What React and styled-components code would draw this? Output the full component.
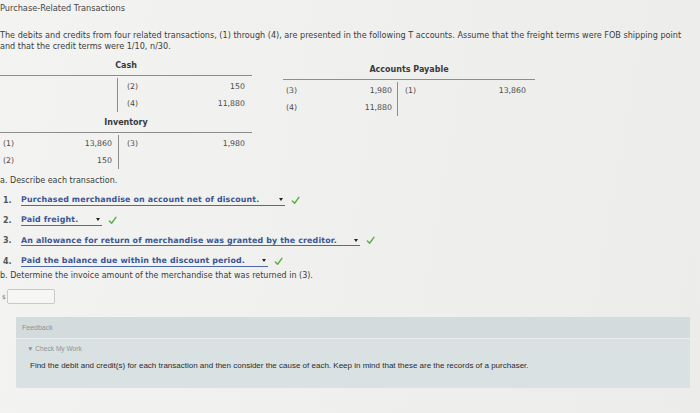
import styled, { createGlobalStyle } from "styled-components";

const GlobalStyle = createGlobalStyle`
  html, body {
    margin: 0;
    padding: 0;
    background: #f0f0ee;
  }
  body {
    width: 700px;
    height: 413px;
    overflow: hidden;
  }
`;

const Page = styled.div`
  width: 700px;
  height: 413px;
  box-sizing: border-box;
  background: linear-gradient(100deg, #f3f3f1 0%, #efefed 55%, #ececea 100%);
  font-family: "DejaVu Sans", Verdana, sans-serif;
  font-size: 8px;
  color: #3c3c3c;
  padding-top: 3px;
`;

const Title = styled.div`
  line-height: 11px;
  color: #464646;
  font-size: 8.2px;
`;

const Intro = styled.p`
  margin: 16px 0 0;
  line-height: 11px;
  width: 690px;
  font-size: 8.1px;
`;

const AccountsRow = styled.div`
  display: flex;
  align-items: flex-start;
  gap: 31px;
  margin-top: 8px;
`;

const AccountsColumn = styled.div`
  display: flex;
  flex-direction: column;
  gap: 5px;
`;

const TAccount = styled.div`
  width: 252px;
  margin-top: ${(p) => p.$offset || 0}px;
`;

const TTitle = styled.div`
  text-align: center;
  font-weight: bold;
  line-height: 12px;
  padding-bottom: 3px;
  color: #3a3a3a;
`;

const TBody = styled.div`
  display: grid;
  grid-template-columns: ${(p) => p.$left || 118}px 1fr;
  border-top: 1px solid #8d8d8d;
  padding-top: 2px;
  min-height: 34px;
`;

const TSide = styled.div`
  display: flex;
  flex-direction: column;
  border-right: ${(p) => (p.$divider ? "1px solid #8d8d8d" : "none")};
`;

const TEntry = styled.div`
  display: flex;
  justify-content: space-between;
  height: 17px;
  line-height: 17px;
  padding: 0 ${(p) => p.$pr}px 0 ${(p) => p.$pl}px;
  color: #4a4a4a;
  font-size: 7.8px;
`;

const PartLabel = styled.div`
  margin-top: ${(p) => p.$gap}px;
  line-height: 11px;
`;

const AnswerList = styled.ol`
  list-style: none;
  margin: 4px 0 0;
  padding: 0;
`;

const AnswerItem = styled.li`
  display: flex;
  align-items: center;
  height: 20.3px;
`;

const ItemNumber = styled.span`
  width: 21px;
  padding-left: 3px;
  box-sizing: border-box;
  font-weight: bold;
  color: #555;
`;

const Select = styled.span`
  display: inline-flex;
  align-items: center;
  justify-content: space-between;
  width: ${(p) => p.$width}px;
  height: 11px;
  box-sizing: border-box;
  border-bottom: 1px solid #4e6aa6;
  font-weight: bold;
  font-size: 7.9px;
  letter-spacing: 0.15px;
  color: #3a5795;
  white-space: nowrap;
`;

const Caret = styled.span`
  width: 0;
  height: 0;
  margin-right: 2px;
  border-left: 2.5px solid transparent;
  border-right: 2.5px solid transparent;
  border-top: 3px solid #222;
`;

const Check = styled.svg`
  width: 9px;
  height: 9px;
  margin-left: 6px;
`;

const AmountRow = styled.div`
  display: flex;
  align-items: center;
  gap: 1px;
  margin-top: 8px;
  padding-left: 2px;
  color: #777;
  font-size: 6px;
`;

const AmountInput = styled.div`
  width: 48px;
  height: 15px;
  box-sizing: border-box;
  border: 1px solid #c9c9c7;
  border-radius: 2px;
  background: #f6f6f4;
`;

const Feedback = styled.section`
  margin: 13px 10px 0 16px;
  background: #d9e1e3;
  border-radius: 2px;
  font-family: "Liberation Sans", Arial, sans-serif;
  height: 71px;
`;

const FeedbackHeader = styled.div`
  height: 21px;
  line-height: 21px;
  padding-left: 6px;
  background: #d3dbdd;
  border-bottom: 1px solid #e8eeef;
  color: #8b9598;
  font-size: 7px;
`;

const FeedbackBody = styled.div`
  padding: 4px 0 0 11px;
`;

const Toggle = styled.div`
  line-height: 12px;
  font-size: 6.6px;
  color: #8b9598;
`;

const Hint = styled.div`
  margin-top: 5px;
  margin-left: 3px;
  line-height: 12px;
  font-size: 8px;
  color: #2c2c2c;
`;

const CheckMark = () => (
  <Check viewBox="0 0 10 10">
    <polyline
      points="1.5,5.5 4,8 8.8,1.5"
      fill="none"
      stroke="#5aae4a"
      strokeWidth="1.6"
      strokeLinecap="round"
      strokeLinejoin="round"
    />
  </Check>
);

const TAcct = ({ title, left, right, leftWidth, pads, offset }) => (
  <TAccount $offset={offset}>
    <TTitle>{title}</TTitle>
    <TBody $left={leftWidth}>
      <TSide $divider>
        {left.map(([ref, amt], i) => (
          <TEntry key={i} $pl={pads[0]} $pr={pads[1]}>
            <span>{ref}</span>
            <span>{amt}</span>
          </TEntry>
        ))}
      </TSide>
      <TSide>
        {right.map(([ref, amt], i) => (
          <TEntry key={i} $pl={pads[2]} $pr={pads[3]}>
            <span>{ref}</span>
            <span>{amt}</span>
          </TEntry>
        ))}
      </TSide>
    </TBody>
  </TAccount>
);

const answers = [
  { text: "Purchased merchandise on account net of discount.", width: 264 },
  { text: "Paid freight.", width: 81 },
  { text: "An allowance for return of merchandise was granted by the creditor.", width: 339 },
  { text: "Paid the balance due within the discount period.", width: 247 },
];

export default function App() {
  return (
    <>
      <GlobalStyle />
      <Page>
        <Title>Purchase-Related Transactions</Title>
        <Intro>
          The debits and credits from four related transactions, (1) through (4), are
          presented in the following T accounts. Assume that the freight terms were FOB
          shipping point and that the credit terms were 1/10, n/30.
        </Intro>

        <AccountsRow>
          <AccountsColumn>
            <TAcct
              title="Cash"
              leftWidth={118}
              pads={[3, 5, 9, 7]}
              left={[]}
              right={[
                ["(2)", "150"],
                ["(4)", "11,880"],
              ]}
            />
            <TAcct
              title="Inventory"
              leftWidth={119}
              pads={[3, 6, 8, 7]}
              left={[
                ["(1)", "13,860"],
                ["(2)", "150"],
              ]}
              right={[["(3)", "1,980"]]}
            />
          </AccountsColumn>
          <TAcct
            title="Accounts Payable"
            offset={4}
            leftWidth={115}
            pads={[3, 5, 7, 9]}
            left={[
              ["(3)", "1,980"],
              ["(4)", "11,880"],
            ]}
            right={[["(1)", "13,860"]]}
          />
        </AccountsRow>

        <PartLabel $gap={6}>a. Describe each transaction.</PartLabel>
        <AnswerList>
          {answers.map((a, i) => (
            <AnswerItem key={i}>
              <ItemNumber>{i + 1}.</ItemNumber>
              <Select $width={a.width}>
                <span>{a.text}</span>
                <Caret />
              </Select>
              <CheckMark />
            </AnswerItem>
          ))}
        </AnswerList>

        <PartLabel $gap={-1}>
          b. Determine the invoice amount of the merchandise that was returned in (3).
        </PartLabel>
        <AmountRow>
          <span>$</span>
          <AmountInput />
        </AmountRow>

        <Feedback>
          <FeedbackHeader>Feedback</FeedbackHeader>
          <FeedbackBody>
            <Toggle>▼ Check My Work</Toggle>
            <Hint>
              Find the debit and credit(s) for each transaction and then consider the cause of
              each. Keep in mind that these are the records of a purchaser.
            </Hint>
          </FeedbackBody>
        </Feedback>
      </Page>
    </>
  );
}
